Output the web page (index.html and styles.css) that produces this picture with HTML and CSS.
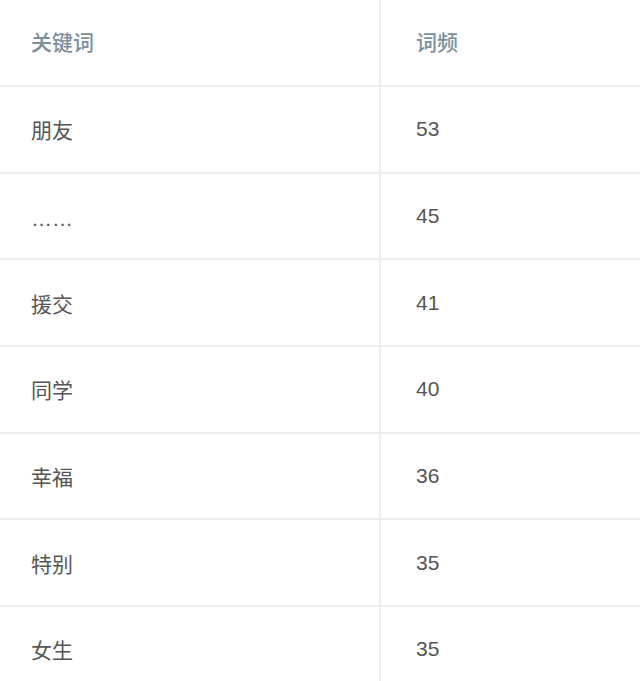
FILE: index.html
```html
<!DOCTYPE html>
<html lang="zh">
<head>
<meta charset="utf-8">
<link rel="stylesheet" href="styles.css">
</head>
<body>
<div class="table">
  <div class="row head"><div class="cell c1">关键词</div><div class="cell c2">词频</div></div>
  <div class="row"><div class="cell c1">朋友</div><div class="cell c2">53</div></div>
  <div class="row"><div class="cell c1"><span class="dots">……</span></div><div class="cell c2">45</div></div>
  <div class="row"><div class="cell c1">援交</div><div class="cell c2">41</div></div>
  <div class="row"><div class="cell c1">同学</div><div class="cell c2">40</div></div>
  <div class="row"><div class="cell c1">幸福</div><div class="cell c2">36</div></div>
  <div class="row"><div class="cell c1">特别</div><div class="cell c2">35</div></div>
  <div class="row"><div class="cell c1">女生</div><div class="cell c2">35</div></div>
</div>
</body>
</html>
```
FILE: styles.css
```css
html, body {
  margin: 0;
  padding: 0;
  background: #ffffff;
  overflow: hidden;
}
.table {
  width: 640px;
  font-family: "Helvetica Neue", "Liberation Sans", "Noto Sans CJK SC", sans-serif;
  font-size: 21px;
  color: #555555;
}
.row {
  display: grid;
  grid-template-columns: 381px 1fr;
  height: 86.67px;
  box-sizing: border-box;
  border-bottom: 2px solid #eeeeee;
}
.cell {
  display: flex;
  align-items: center;
  box-sizing: border-box;
}
.c1 {
  padding-left: 31px;
  border-right: 2px solid #eeeeee;
}
.c2 {
  padding-left: 35px;
}
.dots {
  position: relative;
  top: 3px;
}
.head {
  height: 87px;
}
.head .cell {
  padding-bottom: 3px;
  color: #7b8e9b;
  font-weight: 500;
}
```
